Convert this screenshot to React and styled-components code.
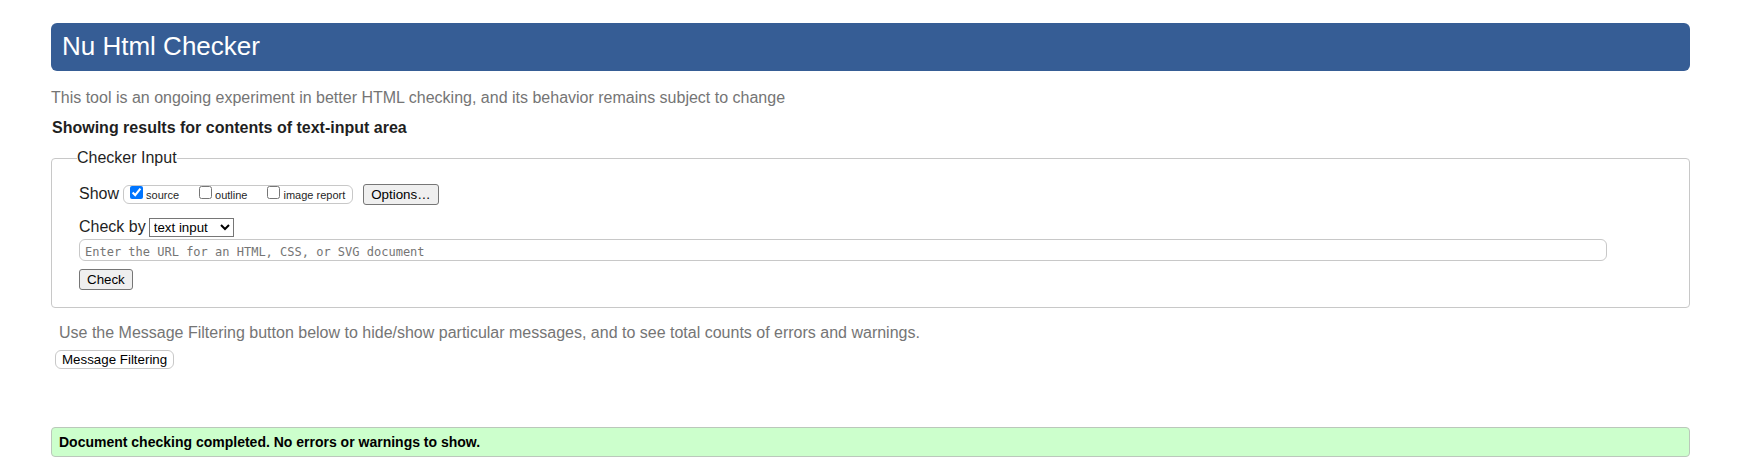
import React from "react";
import styled, { createGlobalStyle } from "styled-components";

const GlobalStyle = createGlobalStyle`
  * { box-sizing: border-box; }
  body {
    margin: 0;
    background: #fff;
    color: #1f1f1f;
    font: 16px/18px "Liberation Sans", Arial, sans-serif;
  }
  button, select { font-family: inherit; }
`;

const Page = styled.div`
  padding: 23px 51px 11px;
`;

const Banner = styled.h1`
  margin: 0;
  padding: 8px 11px 10px;
  border-radius: 6px;
  background: #365d95;
  color: #fff;
  font-size: 26px;
  font-weight: 400;
  line-height: 30px;
`;

const Note = styled.p`
  margin: 0;
  padding: ${(p) => (p.$inset ? "0 8px" : "0")};
  color: #757575;
`;

const Tagline = styled(Note)`
  margin-top: 18px;
`;

const ResultsHeading = styled.h2`
  margin: 12px 0 0;
  padding-left: 1px;
  font-size: 16px;
  font-weight: 700;
`;

const InputPanel = styled.fieldset`
  min-width: 0;
  margin: 12px 0 16px;
  padding: 0 25px 17px;
  border: 1px solid #c8c8c8;
  border-radius: 4px;
`;

const Legend = styled.legend`
  padding: 0;
`;

const Fields = styled.div`
  display: flex;
  flex-direction: column;
  align-items: flex-start;
  padding: 17px 2px 0;
`;

const Row = styled.div`
  display: flex;
  align-items: center;
`;

const RowLabel = styled.label`
  padding-bottom: 2px;
  line-height: 16px;
`;

const ShowRow = styled(Row)`
  margin-bottom: 13px;
`;

const CheckGroup = styled.span`
  display: flex;
  align-items: flex-start;
  gap: 20px;
  height: 19px;
  margin: 0 10px 0 4px;
  padding: 0 7px 0 6px;
  border: 1px solid #c8c8c8;
  border-radius: 6px;
`;

const CheckLabel = styled.label`
  display: flex;
  gap: 3px;
  font-size: 11px;
  line-height: 19px;

  input {
    width: 13px;
    height: 13px;
    margin: 0;
  }
`;

const Button = styled.button`
  height: 21px;
  padding: 0 7px;
  border: 1px solid #767676;
  border-radius: 3px;
  background: #efefef;
  color: #000;
`;

const FilterButton = styled(Button)`
  height: 19px;
  margin: 8px 0 0 4px;
  padding: 0 6px;
  border-color: #c8c8c8;
  border-radius: 6px;
  background: #fff;
`;

const Select = styled.select`
  width: 85px;
  height: 19px;
  margin-left: 3px;
  border: 1px solid #767676;
  border-radius: 0;
  background-color: #fff;
  color: #000;
`;

const UrlInput = styled.input`
  width: calc(100% - 55px);
  height: 22px;
  margin: 2px 0 8px;
  padding: 3px 5px 0;
  border: 1px solid #c8c8c8;
  border-radius: 6px;
  font: 12px "DejaVu Sans Mono", monospace;

  &::placeholder { color: #757575; }
`;

const Result = styled.p`
  margin: 58px 0 0;
  padding: 6px 7px;
  border: 1px solid #bbc8bb;
  border-radius: 4px;
  background: #ccffcc;
  color: #000;
  font-size: 14px;
  font-weight: 700;
  line-height: 16px;
`;

const SHOW_OPTIONS = [
  { name: "source", on: true },
  { name: "outline", on: false },
  { name: "image report", on: false },
];

export default function App() {
  return (
    <Page>
      <GlobalStyle />
      <Banner>Nu Html Checker</Banner>
      <Tagline>
        This tool is an ongoing experiment in better HTML checking, and its behavior remains subject to change
      </Tagline>
      <ResultsHeading>Showing results for contents of text-input area</ResultsHeading>
      <form onSubmit={(e) => e.preventDefault()}>
        <InputPanel>
          <Legend>Checker Input</Legend>
          <Fields>
            <ShowRow role="group" aria-labelledby="show">
              <RowLabel as="span" id="show">Show</RowLabel>
              <CheckGroup>
                {SHOW_OPTIONS.map((o) => (
                  <CheckLabel key={o.name}>
                    <input type="checkbox" name={o.name} defaultChecked={o.on} />
                    {o.name}
                  </CheckLabel>
                ))}
              </CheckGroup>
              <Button type="button">Options…</Button>
            </ShowRow>
            <Row>
              <RowLabel htmlFor="method">Check by</RowLabel>
              <Select id="method" defaultValue="text">
                <option value="address">address</option>
                <option value="upload">file upload</option>
                <option value="text">text input</option>
              </Select>
            </Row>
            <UrlInput
              type="text"
              aria-label="Document address"
              placeholder="Enter the URL for an HTML, CSS, or SVG document"
            />
            <Button type="submit">Check</Button>
          </Fields>
        </InputPanel>
      </form>
      <Note $inset>
        Use the Message Filtering button below to hide/show particular messages, and to see total counts of errors and
        warnings.
      </Note>
      <FilterButton type="button">Message Filtering</FilterButton>
      <Result>Document checking completed. No errors or warnings to show.</Result>
    </Page>
  );
}
